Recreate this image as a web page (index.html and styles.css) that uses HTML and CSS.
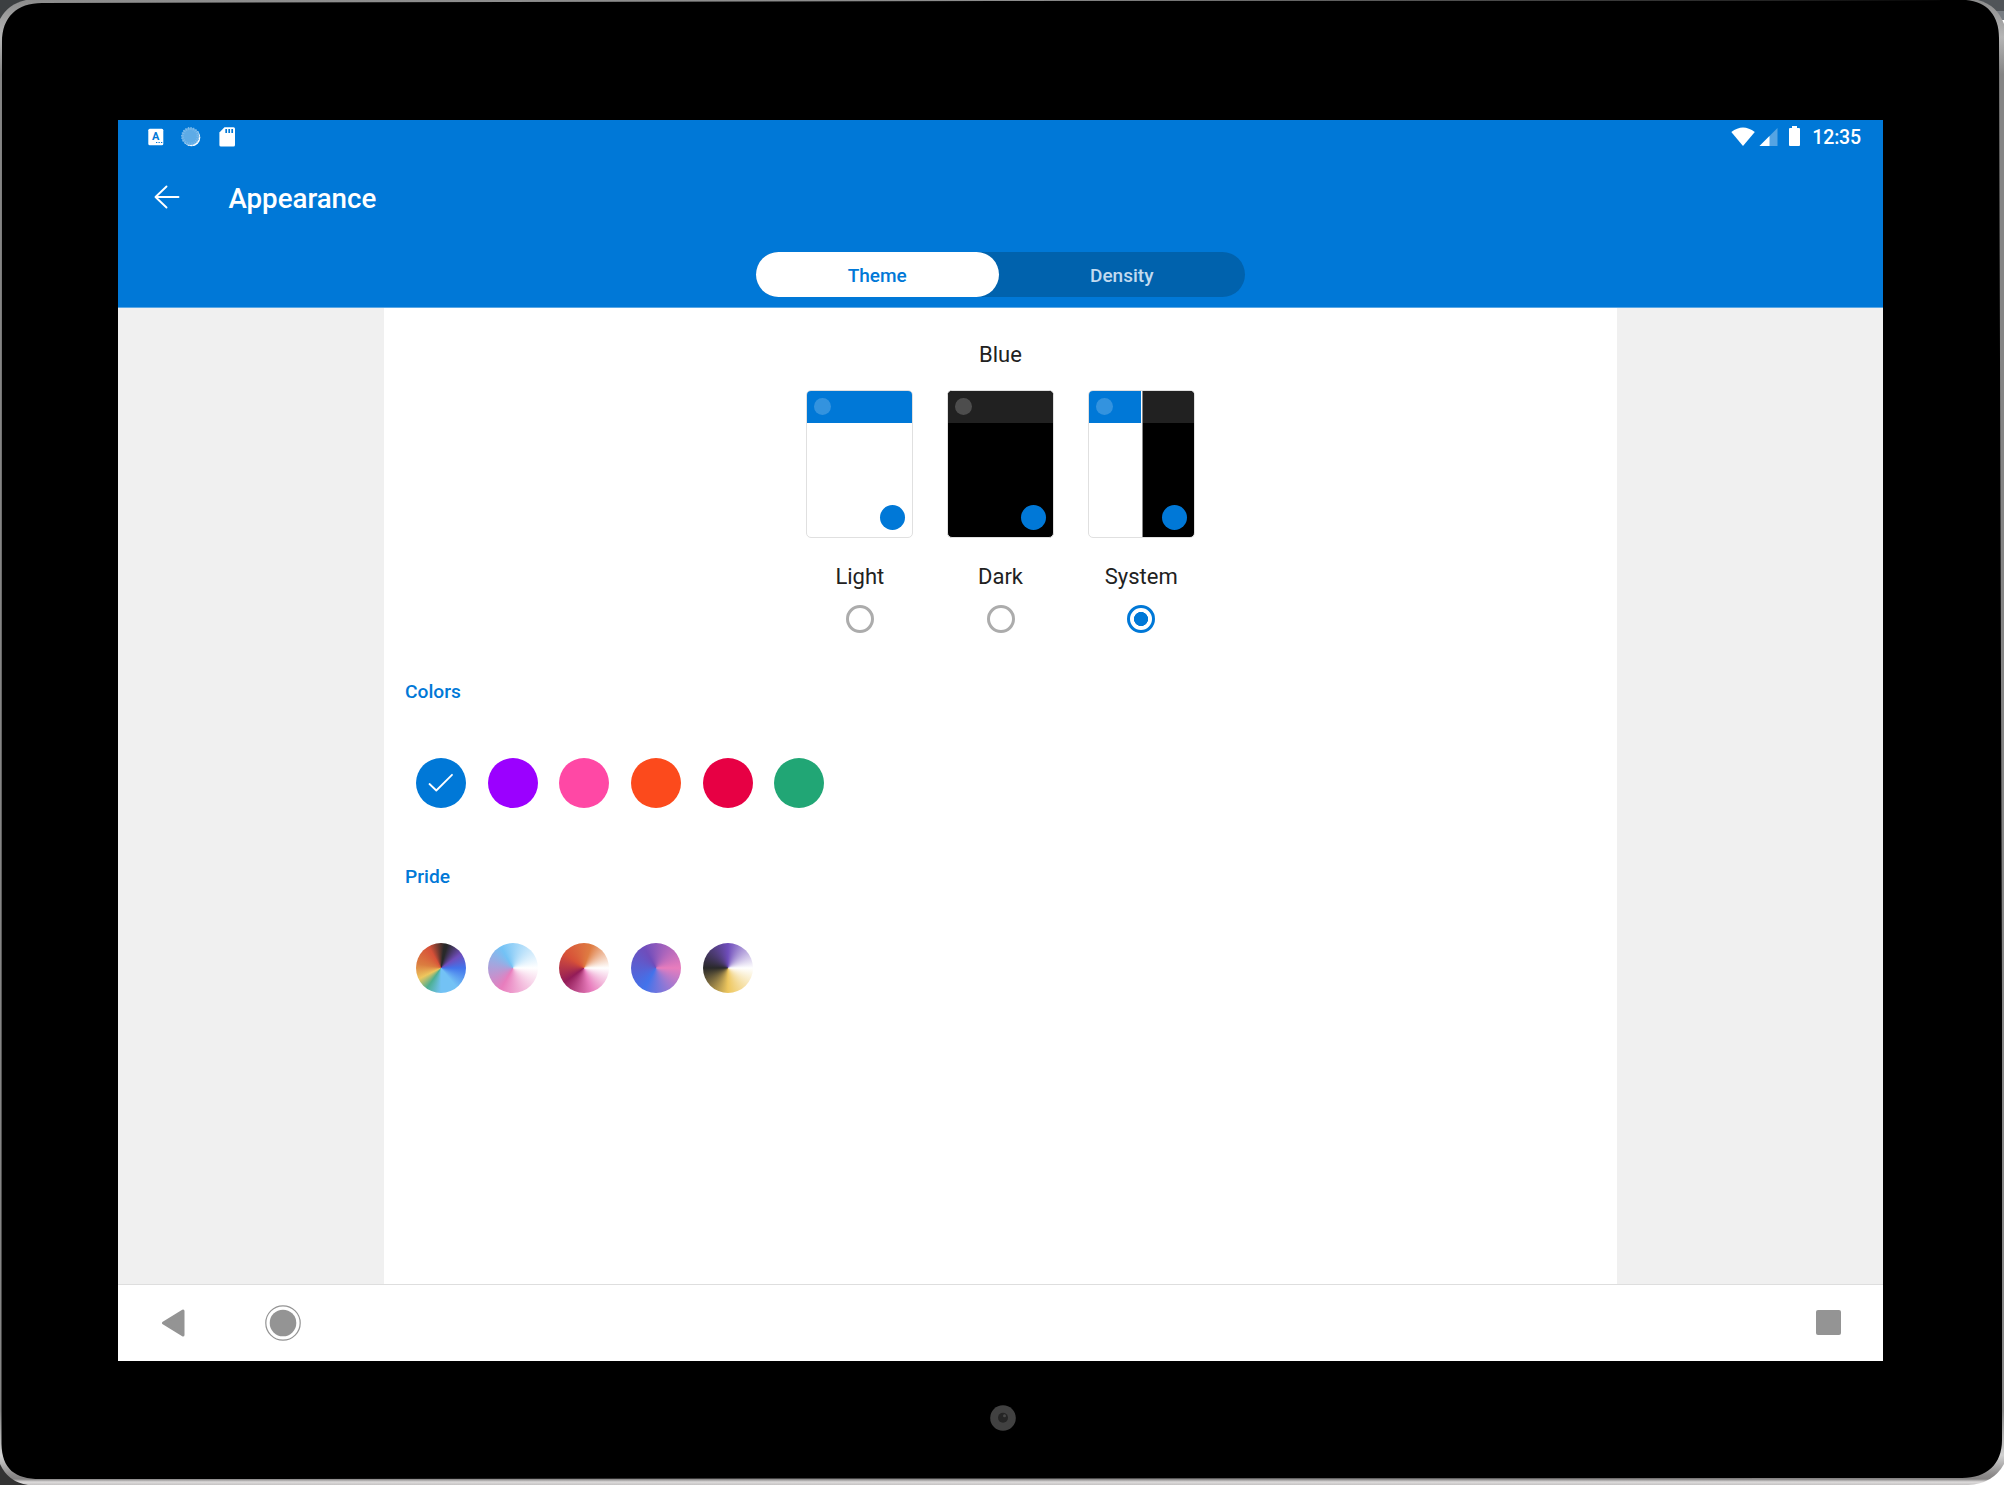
FILE: index.html
```html
<!DOCTYPE html>
<html lang="en">
<head>
<meta charset="utf-8">
<title>Appearance</title>
<link rel="stylesheet" href="styles.css">
</head>
<body>
<div class="device">
  <svg class="bezel" viewBox="0 0 2004 1485" aria-hidden="true">
    <defs>
      <linearGradient id="metal" x1="0" y1="0" x2="0" y2="1">
        <stop offset="0" stop-color="#8c8c8c"/><stop offset=".025" stop-color="#b5b5b5"/><stop offset=".05" stop-color="#858585"/><stop offset=".95" stop-color="#858585"/><stop offset=".98" stop-color="#d2d2d2"/><stop offset=".993" stop-color="#8d8b8b"/><stop offset=".996" stop-color="#858383"/><stop offset=".998" stop-color="#dedcdc"/><stop offset="1" stop-color="#c4c2c2"/>
      </linearGradient>
    </defs>
    <rect width="60" height="60" fill="#3c3f41"/>
    <rect x="1944" width="60" height="11" fill="#505458"/>
    <rect x="1944" y="11" width="60" height="9" fill="#777c82"/>
    <rect y="1425" width="60" height="60" fill="#333"/>
    <path fill="url(#metal)" d="M0 19Q8 4 26 0H1978Q1997 5 2004 24V1464Q1993 1484 1968 1485H28Q8 1482 0 1464Z"/>
    <path fill="#000" d="M2 42C2 17 17 3 42 3L1000 1L1966 0C1987 2 1999 15 1999 38L2002 1000V1440C2002 1464 1987 1478 1962 1478L40 1479C15 1479 2 1469 1.500 1444Z"/>
  </svg>
  <main class="screen">
    <header class="header">
      <div class="status">
        <div class="notifications">
          <svg width="16" height="18" viewBox="0 0 16 18"><rect x=".3" y=".8" width="15" height="16.500" rx="1.500" fill="#fff"/><text x="7.700" y="12.400" text-anchor="middle" class="glyph">A</text><path d="M8 14.500h1.300M10.500 14.500h1.300M13 14.500h1.300" stroke="#0078d7" stroke-width="1.200"/></svg>
          <svg width="20" height="20" viewBox="0 0 20 20"><circle cx="10.500" cy="10.500" r="8.800" fill="#fff"/><circle cx="9.300" cy="9.300" r="8.800" fill="#5eabe6"/><circle cx="9.300" cy="9.300" r="7.800" fill="none" stroke="#7dbaea" stroke-width="3" stroke-dasharray="1 1.450"/></svg>
          <svg width="17" height="20" viewBox="0 0 17 20"><path d="M5.500.3H14.500Q16 .3 16 1.800V18Q16 19.500 14.500 19.500H2Q.4 19.500.4 18V5.600Z" fill="#fff"/><path d="M7.200 2v4M10.200 2v4M13.200 2v4" stroke="#0078d7" stroke-width="1.700"/></svg>
        </div>
        <div class="indicators">
          <svg width="48" height="20" viewBox="0 0 48 20"><path d="M.3 5Q12-4 23.800 5L12 19Z" fill="#fff"/><path d="M46.500 1V19H28.500Z" fill="#55a4e3"/><path d="M38.500 9V19H28.500Z" fill="#fff"/></svg>
          <svg class="battery" width="11" height="20" viewBox="0 0 11 20"><path d="M3 0H8V2H10Q11 2 11 3V19Q11 20 10 20H1Q0 20 0 19V3Q0 2 1 2H3Z" fill="#fff"/></svg>
          <span class="time">12:35</span>
        </div>
      </div>
      <div class="toolbar">
        <svg class="back" width="26" height="24" viewBox="0 0 26 24"><path d="M24.500 12H2M12.500 1.500L1.500 12L12.500 22.500" fill="none" stroke="#fff" stroke-width="1.900" stroke-linecap="round" stroke-linejoin="round"/></svg>
        <h1 class="title">Appearance</h1>
      </div>
      <div class="tabs">
        <div class="tab tab-active">Theme</div>
        <div class="tab">Density</div>
      </div>
    </header>
    <div class="content">
      <section class="panel">
        <h2 class="theme-name">Blue</h2>
        <div class="modes">
          <div class="mode">
            <div class="preview"><div class="preview-bar"></div><i class="avatar"></i><i class="fab"></i></div>
            <div class="mode-label">Light</div><div class="radio"></div>
          </div>
          <div class="mode">
            <div class="preview preview-dark"><div class="preview-bar"></div><i class="avatar"></i><i class="fab"></i></div>
            <div class="mode-label">Dark</div><div class="radio"></div>
          </div>
          <div class="mode">
            <div class="preview preview-system"><div class="preview-bar"></div><i class="avatar"></i><i class="fab"></i></div>
            <div class="mode-label">System</div><div class="radio radio-on"></div>
          </div>
        </div>
        <h3 class="section-title">Colors</h3>
        <div class="swatches">
          <div class="swatch blue"><svg width="26" height="20" viewBox="0 0 26 20"><path d="M1.500 11L8.300 17.500L24 1.800" fill="none" stroke="#fff" stroke-width="1.800" stroke-linecap="round" stroke-linejoin="round"/></svg></div>
          <div class="swatch purple"></div>
          <div class="swatch pink"></div>
          <div class="swatch orange"></div>
          <div class="swatch red"></div>
          <div class="swatch green"></div>
        </div>
        <h3 class="section-title">Pride</h3>
        <div class="swatches">
          <div class="swatch rainbow"></div>
          <div class="swatch trans"></div>
          <div class="swatch lesbian"></div>
          <div class="swatch bi"></div>
          <div class="swatch nonbinary"></div>
        </div>
      </section>
    </div>
    <nav class="navbar">
      <svg class="nav-back" width="24" height="28" viewBox="0 0 24 28"><path d="M22 2V26L2.500 14Z" fill="#949494" stroke="#949494" stroke-width="3" stroke-linejoin="round"/></svg>
      <svg class="nav-home" width="36" height="36" viewBox="0 0 36 36"><circle cx="18" cy="18" r="17.200" fill="none" stroke="#949494" stroke-width="1.200"/><circle cx="18" cy="18" r="13.300" fill="#949494"/></svg>
      <div class="nav-recent"></div>
    </nav>
  </main>
  <svg class="camera" width="26" height="26" viewBox="0 0 26 26"><circle cx="13" cy="13" r="12.800" fill="#414141"/><circle cx="13" cy="12.700" r="5" fill="#252525"/><circle cx="14.500" cy="10.700" r="1.500" fill="#484848"/></svg>
</div>
</body>
</html>
```
FILE: styles.css
```css
* { box-sizing: border-box; }
body { margin: 0; background: #fff; font-family: Roboto, sans-serif; color: #212121; }
h1, h2, h3 { margin: 0; }
svg { display: block; flex: none; }
.device { position: relative; width: 2004px; height: 1485px; padding: 120px 121px 0 118px; overflow: hidden; }
.bezel { position: absolute; inset: 0; width: 2004px; height: 1485px; }
.screen { position: relative; display: flex; flex-direction: column; width: 1765px; height: 1241px; background: #fff; }
.header { height: 188px; background: #0078d7; color: #fff; border-bottom: 1px solid #5ba8e5; }
.status { display: flex; justify-content: space-between; height: 34px; padding: 0 22px 0 29.5px; }
.notifications { display: flex; align-items: center; gap: 17.5px; }
.indicators { display: flex; align-items: center; }
.glyph { font: 700 11px Roboto, sans-serif; fill: #0078d7; }
.battery { margin-left: 10px; margin-top: -2px; }
.time { margin-left: 12px; padding-top: 1px; font-size: 19.5px; font-weight: 500; line-height: 34px; letter-spacing: -.15px; }
.toolbar { display: flex; align-items: center; gap: 48px; height: 88px; padding-left: 36.4px; }
.back { margin-top: -2px; }
.title { font-size: 27.7px; font-weight: 500; line-height: 34px; padding-top: 2px; }
.tabs { display: flex; width: 489px; height: 44.5px; margin: 10px auto 0; border-radius: 23px; background: #0062ad; }
.tab { flex: 1; text-align: center; font-size: 19px; font-weight: 500; line-height: 47px; color: #c2daef; }
.tab-active { flex: 0 0 242.500px; border-radius: 23px; background: #fff; color: #0078d7; }
.content { flex: 1; display: flex; justify-content: center; background: #f0f0f0; }
.panel { width: 1233px; background: #fff; padding: 32px 21px 0; }
.theme-name { font-size: 22px; font-weight: 400; line-height: 30px; text-align: center; }
.modes { display: flex; justify-content: center; gap: 33.700px; margin-top: 20px; }
.mode { width: 107px; display: flex; flex-direction: column; align-items: center; }
.preview { position: relative; width: 107px; height: 148px; border: 1px solid #e0e0e0; border-radius: 5px; overflow: hidden; background: #fff; }
.preview-bar { height: 32px; background: #0078d7; }
.preview-dark { background: #000; }
.preview-dark .preview-bar { background: #212121; }
.preview-system { background: linear-gradient(90deg, #fff 53px, #888 53px 54px, #000 54px); }
.preview-system .preview-bar { background: linear-gradient(90deg, #0078d7 52.500px, #fff 52.500px 53.500px, #888 53.500px 54px, #212121 54px); }
.avatar, .fab { position: absolute; border-radius: 50%; }
.avatar { left: 7px; top: 7px; width: 17px; height: 17px; background: rgba(255,255,255,.2); }
.fab { right: 7px; bottom: 7px; width: 25px; height: 25px; background: #0078d7; }
.mode-label { margin-top: 24px; font-size: 22px; line-height: 30px; }
.radio { width: 28px; height: 28px; margin-top: 13px; border: 3px solid #acacac; border-radius: 50%; }
.radio-on { border-color: #0078d7; background: radial-gradient(circle, #0078d7 6.800px, #fff 7.300px); }
.section-title { color: #0078d7; font-size: 19.2px; font-weight: 500; line-height: 24px; margin-top: 47px; }
.swatches { display: flex; gap: 21.700px; margin-top: 54px; padding-left: 10.900px; }
.swatches + .section-title { margin-top: 57px; }
.swatch { width: 50px; height: 50px; border-radius: 50%; display: flex; align-items: center; justify-content: center; }
.blue { background: #0078d7; }
.purple { background: #9b00ff; }
.pink { background: #ff48a5; }
.orange { background: #fc4a1c; }
.red { background: #e70044; }
.green { background: #21a675; }
.rainbow { background: conic-gradient(from 90deg, #4273eb, #73c2f5 51deg, #73c2f5 90deg, #4caf91 125deg, #eec75e 154deg, #db7d40 190deg, #d75138 240deg, #292929 278deg, #292929 285deg, #6f4dbb 325deg, #4273eb); }
.trans { background: conic-gradient(from 90deg, #fff, #e87dbd 120deg, #73c2f5 240deg, #fff); }
.lesbian { background: conic-gradient(from 90deg, #fff, #e87dbd 72deg, #931c58 144deg, #d75138 216deg, #df7c42 288deg, #fff); }
.bi { background: conic-gradient(from 90deg, #e87dbd, #4273eb 120deg, #6f4dbb 240deg, #e87dbd); }
.nonbinary { background: conic-gradient(from 90deg, #fff, #eec75e 90deg, #292929 180deg, #6f4dbb 270deg, #fff); }
.navbar { display: flex; align-items: center; height: 77px; padding: 0 42px 1px 43px; border-top: 1px solid #dedede; background: #fff; }
.nav-home { margin-left: 80px; }
.nav-recent { width: 25px; height: 25px; margin-left: auto; border-radius: 2px; background: #949494; }
.camera { position: relative; margin: 44px 0 0 872px; }
```
